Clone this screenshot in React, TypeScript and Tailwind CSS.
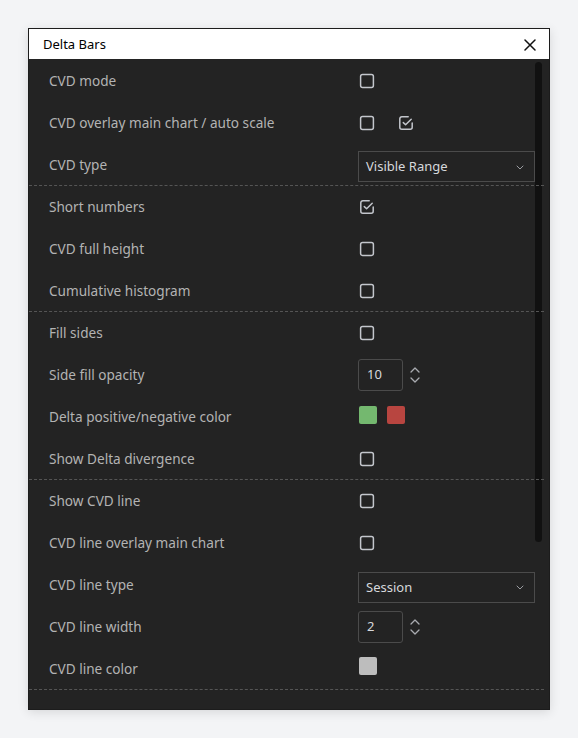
import React from 'react';

type Row =
  | { label: string; kind: 'check'; checked?: boolean; second?: boolean; secondChecked?: boolean }
  | { label: string; kind: 'select'; value: string }
  | { label: string; kind: 'number'; value: string }
  | { label: string; kind: 'colors'; colors: string[] };

const sections: Row[][] = [
  [
    { label: 'CVD mode', kind: 'check' },
    { label: 'CVD overlay main chart / auto scale', kind: 'check', second: true, secondChecked: true },
    { label: 'CVD type', kind: 'select', value: 'Visible Range' },
  ],
  [
    { label: 'Short numbers', kind: 'check', checked: true },
    { label: 'CVD full height', kind: 'check' },
    { label: 'Cumulative histogram', kind: 'check' },
  ],
  [
    { label: 'Fill sides', kind: 'check' },
    { label: 'Side fill opacity', kind: 'number', value: '10' },
    { label: 'Delta positive/negative color', kind: 'colors', colors: ['#74b86f', '#b84540'] },
    { label: 'Show Delta divergence', kind: 'check' },
  ],
  [
    { label: 'Show CVD line', kind: 'check' },
    { label: 'CVD line overlay main chart', kind: 'check' },
    { label: 'CVD line type', kind: 'select', value: 'Session' },
    { label: 'CVD line width', kind: 'number', value: '2' },
    { label: 'CVD line color', kind: 'colors', colors: ['#bdbdbd'] },
  ],
];

function Checkbox({ checked }: { checked?: boolean }) {
  return (
    <svg width="16" height="16" viewBox="0 0 16 16" fill="none" className="block">
      {checked ? (
        <>
          <path d="M14.2 8v4.2a2 2 0 0 1-2 2H3.8a2 2 0 0 1-2-2V3.8a2 2 0 0 1 2-2h6.4" stroke="#c3c6cc" strokeWidth="1.5" strokeLinecap="round" />
          <path d="M5.3 7.6l2.3 2.1 5.6-5.4" stroke="#c3c6cc" strokeWidth="1.5" strokeLinecap="round" strokeLinejoin="round" />
        </>
      ) : (
        <rect x="1.6" y="1.6" width="12.8" height="12.8" rx="2" stroke="#c3c6cc" strokeWidth="1.5" />
      )}
    </svg>
  );
}

function Chevron({ up }: { up?: boolean }) {
  return (
    <svg width="10" height="6" viewBox="0 0 10 6" fill="none" className="block">
      <path d={up ? 'M1 5l4-4 4 4' : 'M1 1l4 4 4-4'} stroke="#a9abb0" strokeWidth="1.3" strokeLinecap="round" strokeLinejoin="round" />
    </svg>
  );
}

function Control({ row }: { row: Row }) {
  if (row.kind === 'check') {
    return (
      <div className="flex items-center gap-[23px] pl-[1px]">
        <Checkbox checked={row.checked} />
        {row.second && <Checkbox checked={row.secondChecked} />}
      </div>
    );
  }
  if (row.kind === 'select') {
    return (
      <div className="mt-[4px] flex h-[31px] w-[177px] items-center justify-between border border-[#4b4b4b] pl-[7px] pr-[10px] pt-[1px] text-[13px] text-[#d6d8dc]">
        <span>{row.value}</span>
        <svg width="8" height="5" viewBox="0 0 8 5" fill="none">
          <path d="M1 1l3 3 3-3" stroke="#9a9ca1" strokeWidth="1" strokeLinecap="round" strokeLinejoin="round" />
        </svg>
      </div>
    );
  }
  if (row.kind === 'number') {
    return (
      <div className="flex items-center gap-[7px]">
        <div className="flex h-[32px] w-[45px] items-center rounded-[3px] border border-[#4b4b4b] pl-[8px] text-[13px] text-[#d6d8dc]">
          {row.value}
        </div>
        <div className="flex flex-col gap-[4px]">
          <Chevron up />
          <Chevron />
        </div>
      </div>
    );
  }
  return (
    <div className="mb-[5px] flex items-center gap-[10px] pl-[1px]">
      {row.colors.map((c) => (
        <div key={c} className="h-[18px] w-[18px] rounded-[2px]" style={{ backgroundColor: c }} />
      ))}
    </div>
  );
}

export default function App() {
  return (
    <div className="min-h-screen bg-[#f3f4f6] pl-[28px] pt-[28px]" style={{ fontFamily: '"Noto Sans", "Liberation Sans", sans-serif' }}>
      <div className="flex h-[682px] w-[522px] flex-col border border-[#1c1c1c] shadow-[0_2px_10px_rgba(0,0,0,0.12)]">
        <div className="flex h-[30px] items-center justify-between bg-white pl-[14px] pr-[13px] pt-[1px] text-[13px] text-black">
          <span>Delta Bars</span>
          <svg width="12" height="12" viewBox="0 0 12 12" fill="none">
            <path d="M1 1l10 10M11 1L1 11" stroke="#111" strokeWidth="1.5" strokeLinecap="round" />
          </svg>
        </div>
        <div className="relative flex-1 bg-[#232323] pt-[1px]">
          <div className="absolute right-[7px] top-[3px] h-[480px] w-[7px] rounded-full bg-[#111111]" />
          <div className="relative pr-[5px]">
            {sections.map((rows, si) => (
              <div key={si} className="border-b border-dashed border-[#555555]">
                {rows.map((row, ri) => (
                  <div key={row.label} className={`flex items-center ${ri === rows.length - 1 ? 'h-[41px]' : 'h-[42px]'}`}>
                    <div className="w-[329px] pl-[20px] pt-[1px] text-[13.6px] text-[#b3b3b3]">{row.label}</div>
                    <Control row={row} />
                  </div>
                ))}
              </div>
            ))}
          </div>
        </div>
      </div>
    </div>
  );
}
